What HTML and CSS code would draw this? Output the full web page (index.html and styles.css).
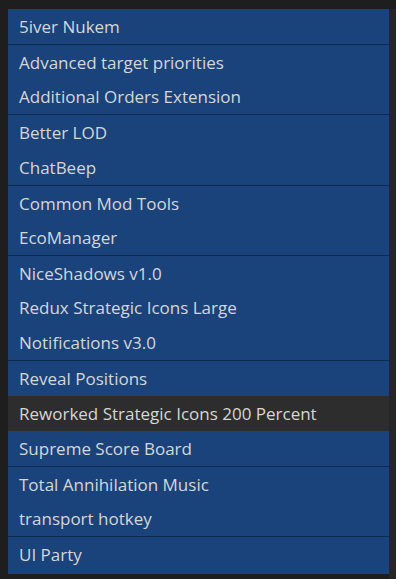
FILE: index.html
```html
<!DOCTYPE html>
<html lang="en">
<head>
  <meta charset="UTF-8">
  <title>Mods</title>
  <link rel="stylesheet" href="styles.css">
</head>
<body>
  <div class="frame">
    <ul class="mod-list">
      <li class="mod">5iver Nukem</li>
      <li class="mod sep">Advanced target priorities</li>
      <li class="mod">Additional Orders Extension</li>
      <li class="mod sep">Better LOD</li>
      <li class="mod">ChatBeep</li>
      <li class="mod sep">Common Mod Tools</li>
      <li class="mod">EcoManager</li>
      <li class="mod sep">NiceShadows v1.0</li>
      <li class="mod">Redux Strategic Icons Large</li>
      <li class="mod">Notifications v3.0</li>
      <li class="mod sep">Reveal Positions</li>
      <li class="mod selected">Reworked Strategic Icons 200 Percent</li>
      <li class="mod">Supreme Score Board</li>
      <li class="mod sep">Total Annihilation Music</li>
      <li class="mod">transport hotkey</li>
      <li class="mod sep">UI Party</li>
    </ul>
    <div class="track"></div>
  </div>
</body>
</html>
```

FILE: styles.css
```css
html, body {
  margin: 0;
  height: 100%;
  background: #1e1e1e;
}

body {
  font-family: "Segoe UI", "Open Sans", "Noto Sans", sans-serif;
  font-size: 17px;
  color: #d6d6d6;
}

.frame {
  display: flex;
  height: 570px;
  padding: 9px 0 0 8px;
}

.mod-list {
  list-style: none;
  margin: 0;
  padding: 0 0 3px;
  width: 381px;
  align-self: flex-start;
  background: #1a437c;
}

.mod {
  box-sizing: border-box;
  height: 35.15px;
  line-height: 32px;
  padding: 2px 0 0 11px;
  white-space: nowrap;
}

.mod.sep {
  border-top: 1px solid #0f2a4f;
}

.mod.selected {
  background: #2d2d2d;
}

.track {
  width: 7px;
  background: #262626;
}
```
